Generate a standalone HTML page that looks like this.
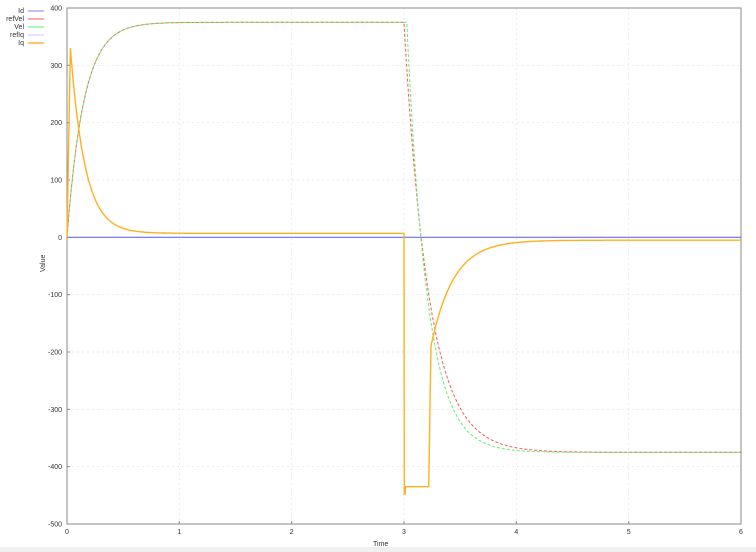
<!DOCTYPE html>
<html><head><meta charset="utf-8"><style>
html,body{margin:0;padding:0;background:#fff;width:756px;height:552px;overflow:hidden}
svg text{font-family:"Liberation Sans",sans-serif;font-size:7px;fill:#333}
</style></head><body>
<svg id="s" width="756" height="552" viewBox="0 0 756 552" xmlns="http://www.w3.org/2000/svg">
<rect x="0" y="547" width="756" height="5" fill="#f0f0f0"/>
<g id="grid" stroke="#e4e4e4" stroke-width="0.7" stroke-dasharray="2,3"></g>
<g id="lbl"></g>
<rect x="67" y="8" width="674" height="516" fill="none" stroke="#888" stroke-width="1"/>
<path id="id" fill="none" stroke="#6a6aff" stroke-width="1.2"/>
<path id="rv" fill="none" stroke="#ff5555" stroke-width="1" stroke-dasharray="3,2"/>
<path id="v" fill="none" stroke="#66ee66" stroke-width="1" stroke-dasharray="3,2" stroke-dashoffset="2"/>
<path id="iq" fill="none" stroke="#ffb020" stroke-width="1.4"/>
<text x="373" y="546" font-size="7">Time</text>
<text transform="translate(45,272) rotate(-90)" font-size="7">Value</text>
<g>
<text x="24" y="13" text-anchor="end">Id</text><line x1="28" y1="11" x2="44" y2="11" stroke="#8080ff"/>
<text x="24" y="21" text-anchor="end">refVel</text><line x1="28" y1="19" x2="44" y2="19" stroke="#ff5555"/>
<text x="24" y="29" text-anchor="end">Vel</text><line x1="28" y1="27" x2="44" y2="27" stroke="#66ee66"/>
<text x="24" y="37" text-anchor="end">refIq</text><line x1="28" y1="35" x2="44" y2="35" stroke="#d8c0ff"/>
<text x="24" y="45" text-anchor="end">Iq</text><line x1="28" y1="43" x2="44" y2="43" stroke="#ffb020" stroke-width="1.4"/>
</g>
</svg>
<script>
var X=function(t){return 67+t*674/6},Y=function(v){return 8+(400-v)*516/900};
var g=document.getElementById('grid'),l=document.getElementById('lbl'),h='';
for(var v=-400;v<=300;v+=100)h+='<line x1="67" x2="741" y1="'+Y(v)+'" y2="'+Y(v)+'"/>';
for(var t=1;t<=5;t++)h+='<line y1="8" y2="524" x1="'+X(t)+'" x2="'+X(t)+'"/>';
g.innerHTML=h;h='';
for(var v=-500;v<=400;v+=100)h+='<text x="62" y="'+(Y(v)+2.5)+'" text-anchor="end">'+v+'</text><line x1="67" x2="70" y1="'+Y(v)+'" y2="'+Y(v)+'" stroke="#888"/>';
for(var t=0;t<=6;t++)h+='<text x="'+X(t)+'" y="534" text-anchor="middle">'+t+'</text><line y1="524" y2="521" x1="'+X(t)+'" x2="'+X(t)+'" stroke="#888"/>';
l.innerHTML=h;
function P(f){var d='';for(var t=0;t<=6.0001;t+=0.005){d+=(d?'L':'M')+X(t).toFixed(1)+','+Y(f(t)).toFixed(1)}return d}
function vel(t,dl,tau){if(t<3+dl)return 375*(1-Math.exp(-t/0.15));return -375+750*Math.exp(-(t-3-dl)/tau)}
document.getElementById('id').setAttribute('d','M67,'+Y(0)+'L741,'+Y(0));
document.getElementById('rv').setAttribute('d',P(function(t){return vel(t,0,0.22)}));
document.getElementById('v').setAttribute('d',P(function(t){return vel(t,0.025,0.18)}));
var iq=function(t){if(t<0.03)return 330*t/0.03;if(t<3)return 7+323*Math.exp(-(t-0.03)/0.13);if(t<3.22)return t<3.01?-448:-435;if(t<3.24)return -435+(t-3.22)/0.02*245;return -5-185*Math.exp(-(t-3.24)/0.2)};
var d='M67,'+Y(0);for(var t=0.005;t<=6.0001;t+=0.0025)d+='L'+X(t).toFixed(1)+','+Y(iq(t)).toFixed(1);
document.getElementById('iq').setAttribute('d',d);
</script>
</body></html>
